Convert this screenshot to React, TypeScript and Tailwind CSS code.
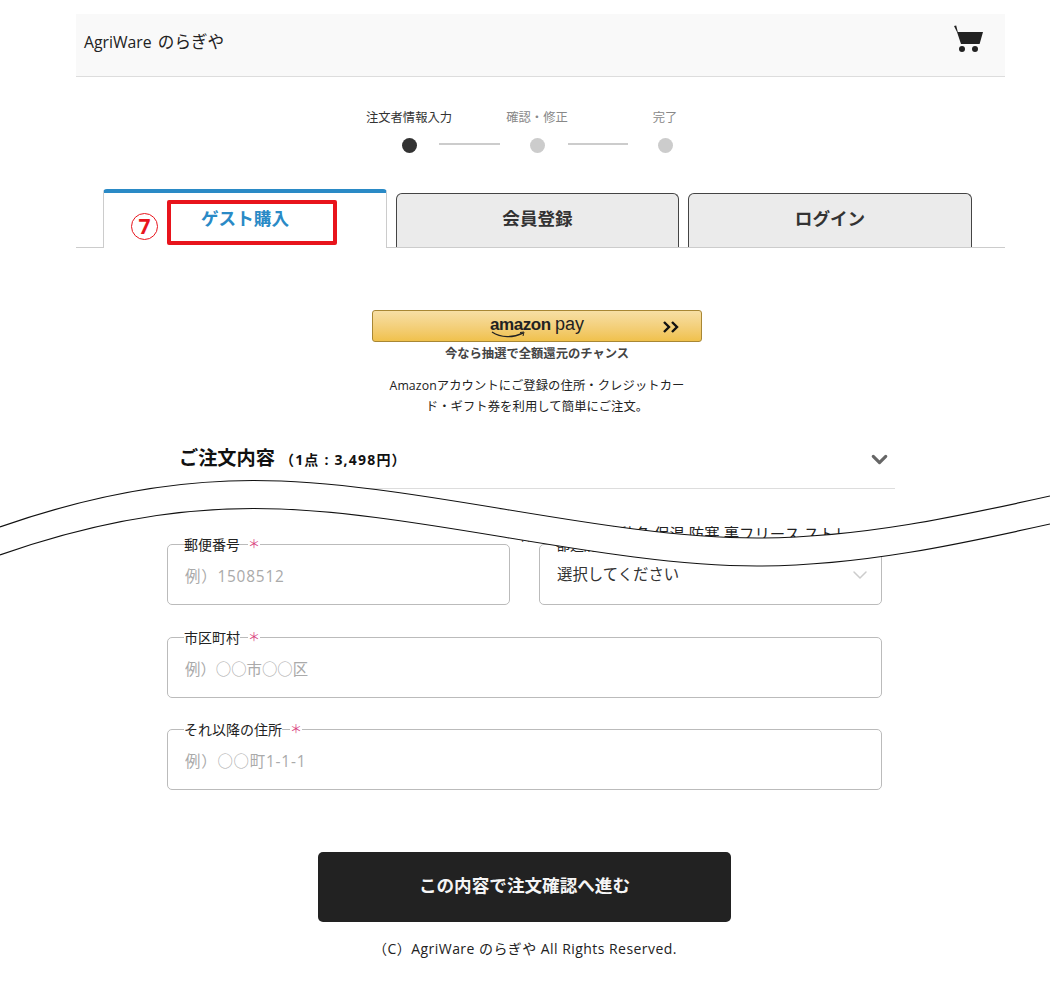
import React from 'react';
import { ChevronDown } from 'lucide-react';

const steps = [
  { label: '注文者情報入力', active: true },
  { label: '確認・修正', active: false },
  { label: '完了', active: false },
];

const Field = ({
  label,
  placeholder,
  className = '',
  inputClass = '',
}: {
  label: string;
  placeholder: string;
  className?: string;
  inputClass?: string;
}) => (
  <div className={`relative h-[61px] rounded-[5px] border border-[#bbb] ${className}`}>
    <div className="absolute left-[16px] top-[-9px] flex items-center text-[14px] leading-[17px] text-[#222]">
      <span className="bg-white">{label}</span>
      <span className="ml-[8px] bg-white text-[12px] leading-[14px] text-[#d9467f]">＊</span>
    </div>
    <input
      readOnly
      placeholder={placeholder}
      className={`h-full w-full bg-transparent pl-[17px] pt-[4px] text-[15.4px] outline-none placeholder:text-[#aaa] ${inputClass}`}
    />
  </div>
);

const App: React.FC = () => {
  return (
    <div className="relative h-[1000px] overflow-hidden bg-white font-['Open_Sans','Noto_Sans_CJK_JP',sans-serif] text-[#222]">
      <div className="ml-[76px] w-[929px] pt-[14px]">
        <header className="flex h-[63px] items-center justify-between border-b border-[#ddd] bg-[#f9f9f9] pl-[8px] pr-[21px]">
          <span className="mb-[6px] text-[15.8px] text-[#222]">
            AgriWare <span className="ml-[2px] text-[16.6px]">のらぎや</span>
          </span>
          <svg width="30" height="28" viewBox="0 0 30 28" className="mb-[12px]" fill="#222">
            <path d="M0 1 L2.2 0.4 L3.8 7 H29 L25.6 19 H7 L3 7 Z" />
            <circle cx="8" cy="24" r="3" />
            <circle cx="21" cy="24" r="3" />
          </svg>
        </header>

        <div className="ml-[269px] mt-[32px] grid w-[384px] grid-cols-3 text-center text-[12.3px] leading-[17px]">
          {steps.map((step) => (
            <div key={step.label} className={step.active ? 'text-[#333]' : 'text-[#888]'}>
              {step.label}
            </div>
          ))}
        </div>
        <div className="ml-[326px] mt-[12px] flex h-[15px] items-center">
          <span className="h-[15px] w-[15px] rounded-full bg-[#333]" />
          <span className="mb-[4px] ml-[22px] h-[2px] w-[61px] bg-[#ccc]" />
          <span className="ml-[30px] h-[15px] w-[15px] rounded-full bg-[#ccc]" />
          <span className="mb-[4px] ml-[23px] h-[2px] w-[60px] bg-[#ccc]" />
          <span className="ml-[30px] h-[15px] w-[15px] rounded-full bg-[#ccc]" />
        </div>

        <div className="relative mt-[36px] flex h-[59px] items-end border-b border-[#ccc] pl-[27px]">
          <div className="mb-[-1px] flex h-[59px] w-[284px] items-start justify-center rounded-t-[4px] border-x border-t-[4px] border-x-[#ccc] border-t-[#2a8ac6] bg-white pt-[13px] text-[17.6px] font-bold leading-[24px] text-[#2a8ac6]">
            ゲスト購入
          </div>
          <div className="ml-[9px] flex h-[54px] w-[283px] items-start justify-center rounded-t-[6px] border-x border-t border-[#444] bg-[#ebebeb] pt-[12px] text-[17.6px] font-bold leading-[24px] text-[#333]">
            会員登録
          </div>
          <div className="ml-[9px] flex h-[54px] w-[284px] items-start justify-center rounded-t-[6px] border-x border-t border-[#444] bg-[#ebebeb] pt-[12px] text-[17.6px] font-bold leading-[24px] text-[#333]">
            ログイン
          </div>
          <span className="absolute left-[55px] top-[24px] flex h-[27px] w-[27px] items-center justify-center rounded-full border border-[#e8141c] text-[21px] font-bold leading-none text-[#e8141c]">
            7
          </span>
          <span className="absolute left-[91px] top-[11px] h-[45px] w-[170px] rounded-[2px] border-[4px] border-[#e8141c]" />
        </div>

        <div className="mt-[62px] flex flex-col items-center pr-[7px]">
          <div className="relative flex h-[32px] w-[330px] items-center justify-center rounded-[3px] border border-[#a88734] bg-gradient-to-b from-[#f7dfa5] to-[#f0c14b] pb-[5px]">
            <span className="font-['Liberation_Sans',sans-serif] text-[17px] font-bold leading-none tracking-[-0.4px] text-[#222]">
              amazon <span className="text-[18px] font-normal tracking-normal">pay</span>
            </span>
            <svg width="44" height="8" viewBox="0 0 44 8" className="absolute left-[118px] top-[20px]" fill="none">
              <path d="M1 1 C 10 7, 22 7, 32 2" stroke="#222" strokeWidth="1.4" />
              <path d="M29 1.5 L33 1 L32 5" stroke="#222" strokeWidth="1" />
            </svg>
            <svg width="16" height="12" viewBox="0 0 16 12" className="absolute right-[22px] top-[10px]" fill="none" stroke="#111" strokeWidth="2.4">
              <path d="M1 1 L6 6 L1 11" />
              <path d="M9 1 L14 6 L9 11" />
            </svg>
          </div>
          <p className="mt-[3px] text-[12.3px] font-bold leading-[17px] text-[#444]">今なら抽選で全額還元のチャンス</p>
          <p className="mt-[13px] text-center text-[12.3px] leading-[21px] tracking-[0.1px] text-[#222]">
            Amazonアカウントにご登録の住所・クレジットカー
            <br />
            ド・ギフト券を利用して簡単にご注文。
          </p>
        </div>

        <div className="ml-[91px] mt-[21px] flex h-[51px] w-[728px] items-center justify-between border-b border-[#ddd] pb-[8px] pl-[12px] pr-[3px]">
          <div className="mb-[1px] flex items-baseline">
            <span className="text-[19.2px] font-bold text-[#111]">ご注文内容</span>
            <span className="ml-[5px] text-[14px] font-bold tracking-[1.2px] text-[#111]">（1点 : 3,498円）</span>
          </div>
          <ChevronDown size={25} strokeWidth={3} className="text-[#666]" />
        </div>

        <div className="ml-[91px] mt-[35px] flex h-[22px] w-[683px] justify-end overflow-hidden whitespace-nowrap text-[15.4px] leading-[22px] text-[#222]">
          作業着 メンズ 秋冬 保温 防寒 裏フリース ストレ
        </div>

        <div className="ml-[91px] mt-[-2px] w-[715px]">
          <div className="grid grid-cols-[343px_343px] gap-x-[29px]">
            <Field label="郵便番号" placeholder="例）1508512" inputClass="tracking-[0.8px]" />
            <div className="relative flex h-[61px] items-center justify-between rounded-[5px] border border-[#bbb] pl-[17px] pr-[9px] pt-[1px]">
              <span className="absolute left-[16px] top-[-9px] bg-white text-[14px] leading-[17px]">都道府県</span>
              <span className="text-[15.4px] text-[#333]">選択してください</span>
              <ChevronDown size={24} strokeWidth={1.5} className="text-[#ccc]" />
            </div>
          </div>
          <Field label="市区町村" placeholder="例）○○市○○区" className="mt-[32px]" />
          <Field label="それ以降の住所" placeholder="例）○○町1-1-1" className="mt-[31px]" inputClass="tracking-[0.8px]" />
        </div>

        <div className="ml-[242px] mt-[62px] flex h-[70px] w-[413px] items-center justify-center rounded-[5px] bg-[#222] pb-[3px] text-[17.6px] font-bold text-[#f5f5f5]">
          この内容で注文確認へ進む
        </div>
        <p className="mt-[17px] pr-[31px] text-center text-[14px] leading-[20px] tracking-[0.45px] text-[#222]">（C）AgriWare のらぎや All Rights Reserved.</p>
      </div>

      {/* page-break wave over the form */}
      <svg width="1050" height="120" viewBox="0 470 1050 120" className="absolute left-0 top-[470px]" fill="none">
        <path
          d="M0 527 C 85 497, 170 480.5, 253 480.5 C 410 480.5, 600 538, 757 538 C 860 538, 960 516, 1050 496 V 524 C 960 544, 860 566, 757 566 C 600 566, 410 508.5, 253 508.5 C 170 508.5, 85 525, 0 555 Z"
          fill="#fff"
        />
        <path d="M0 527 C 85 497, 170 480.5, 253 480.5 C 410 480.5, 600 538, 757 538 C 860 538, 960 516, 1050 496" stroke="#111" strokeWidth="1.2" />
        <path d="M0 555 C 85 525, 170 508.5, 253 508.5 C 410 508.5, 600 566, 757 566 C 860 566, 960 544, 1050 524" stroke="#111" strokeWidth="1.2" />
      </svg>
    </div>
  );
};

export default App;
